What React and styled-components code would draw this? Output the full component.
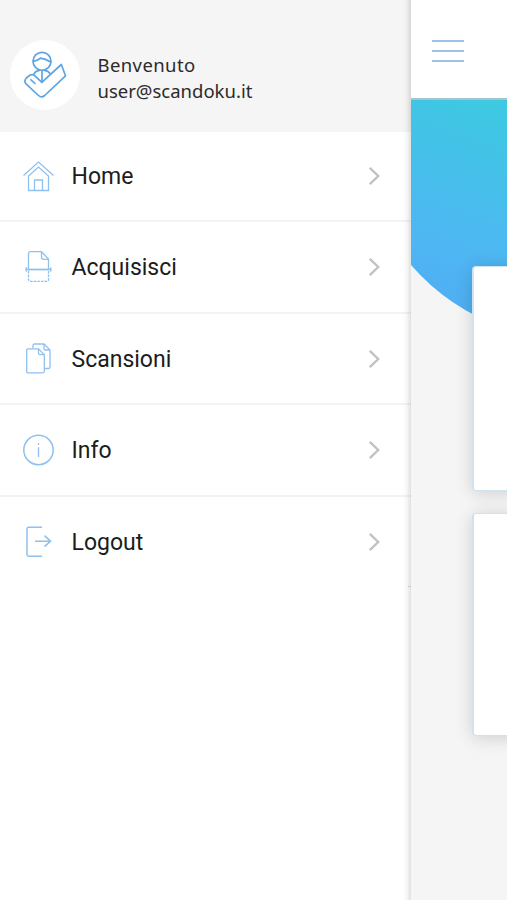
import React from "react";
import styled, {createGlobalStyle, css} from "styled-components";

const GlobalStyle = createGlobalStyle`
    * {
        box-sizing: border-box;
    }
    body {
        margin: 0;
        background: #f5f5f5;
        font-family: Roboto, "Liberation Sans", sans-serif;
    }
`;

const ScreenBlock = styled.div`
    display: flex;
    width: 507px;
    height: 900px;
    overflow: hidden;
`;

const DrawerBlock = styled.aside`
    flex: 0 0 411px;
    display: flex;
    flex-direction: column;
    background: white;
    z-index: 1;
    position: relative;

    /* soft edge over the header and the rows */
    &::after {
        content: "";
        position: absolute;
        top: 0;
        right: 0;
        bottom: 0;
        width: 8px;
        background: linear-gradient(to right, rgba(0, 0, 0, 0), rgba(0, 0, 0, 0.03) 45%, rgba(0, 0, 0, 0.12));
    }
`;

const UserBlock = styled.header`
    display: flex;
    align-items: center;
    gap: 17.5px;
    height: 132px;
    padding: 18px 10px 0;
    background: #f5f5f5;
`;

const AvatarBlock = styled.div`
    width: 70px;
    height: 70px;
    border-radius: 50%;
    background: white;
`;

const UserText = styled.div`
    font-family: "Noto Sans", sans-serif;
    font-size: 18.5px;
    line-height: 26px;
    color: #2b2b2b;
    padding-top: 5px;
`;

const UserName = styled.div`
    letter-spacing: 0.4px;
`;

const UserMail = styled.div`
    letter-spacing: 0;
`;

const MenuBlock = styled.nav`
    display: flex;
    flex-direction: column;
`;

const MenuItem = styled.a`
    display: flex;
    align-items: center;
    height: 91.5px;
    padding: 1px 30.5px 0 22px;
    color: #1c1c1c;
    ${props => props.$first && css`
        height: 90px;
        padding-top: 0;
    `}
    ${props => !props.$last && css`
        border-bottom: 2px solid #f3f3f3;
    `}
    ${props => props.$last && css`
        border-bottom: 2px solid transparent;
        padding-top: 2px;
    `}
`;

const MenuLabel = styled.span`
    flex: 1;
    margin-left: 17.5px;
    padding-top: 1px;
    font-size: 23px;
    letter-spacing: 0;
`;

/* end of the last divider, visible only at the drawer edge */
const MenuEnd = styled.div`
    align-self: flex-end;
    width: 3px;
    height: 1px;
    margin-top: -2px;
    background: #dedede;
`;

const PageBlock = styled.main`
    flex: 1;
    min-width: 0;
    background: #f5f5f5;
`;

const TopBar = styled.div`
    display: flex;
    align-items: center;
    height: 98px;
    padding: 4px 0 0 21px;
    background: white;
`;

const BurgerBlock = styled.div`
    display: flex;
    flex-direction: column;
    justify-content: space-between;
    width: 32px;
    height: 22px;
    span {
        height: 2px;
        background: #9fc1e6;
    }
`;

const HeroBlock = styled.div`
    height: 230px;
    border-top: 2px solid #a3c5cd;
    svg {
        display: block;
    }
`;

const CardList = styled.div`
    display: flex;
    flex-direction: column;
    gap: 22px;
    margin: -62px 0 0 61px;
    position: relative;
`;

const CardBlock = styled.div`
    width: 300px;
    height: ${props => props.$height}px;
    background: white;
    border: 1px solid #cfe2f0;
    border-width: 1px 1px 1px 2px;
    border-radius: 4px;
    box-shadow: 0 2px 18px rgba(0, 0, 0, 0.16);
`;

const Icon = ({children, color = "#8fc0ee"}) => (
    <svg width="32" height="32" viewBox="0 0 32 32" fill="none" stroke={color} strokeWidth="1.3">
        {children}
    </svg>
);

const HomeIcon = () => (
    <Icon>
        <path d="M1.5 15.5 16.5 2 31.5 15.5"/>
        <path d="M6.5 30.5V16L16.5 7 26.5 16V30.5Z"/>
        <path d="M12.5 30.5V20H20.5V30.5"/>
    </Icon>
);

const ScanIcon = () => (
    <Icon>
        <path d="M6.5 18V2.5Q6.5 .7 8.3 .7H19.5L26.5 8V18M19.5 .7V6.2Q19.5 8.3 21.5 8.3H26.5"/>
        <path d="M3.5 18.5H29.5" strokeWidth="1.8"/>
        <path d="M4.2 16V21M28.8 16V21" strokeWidth="1"/>
        <path d="M6.5 20V28.5Q6.5 30.3 8.3 30.3H24.7Q26.5 30.3 26.5 28.5V20" strokeDasharray="2.6 1"/>
    </Icon>
);

const FilesIcon = () => (
    <Icon>
        <path d="M11 5V2.5Q11 1 12.5 1H22L28 7V24Q28 25.5 26.5 25.5H22.5"/>
        <path d="M22 1V5.5Q22 7 23.5 7H28"/>
        <path d="M6 5.8H16.5L22.3 11.7V28.3Q22.3 29.8 20.8 29.8H6.2Q4.7 29.8 4.7 28.3V7.3Q4.7 5.8 6.2 5.8Z"/>
        <path d="M16.5 5.8V10.2Q16.5 11.7 18 11.7H22.3"/>
    </Icon>
);

const InfoIcon = () => (
    <Icon>
        <circle cx="16.5" cy="16" r="14.7" strokeWidth="1.5"/>
        <path d="M16.5 13.2V23M16.5 9V10.9"/>
    </Icon>
);

const LogoutIcon = () => (
    <Icon>
        <path d="M20 1.2H6.7Q5 1.2 5 2.9V28.5Q5 30.2 6.7 30.2H20" strokeWidth="1.5"/>
        <path d="M13 15.2H28.5M22.5 9.7 28.5 15.2 22.5 20.7" strokeWidth="1.6"/>
    </Icon>
);

const Chevron = () => (
    <svg width="14" height="20" viewBox="0 0 14 20" fill="none" stroke="#c2c2c2" strokeWidth="2.4">
        <path d="M2.8 1.8 11.2 10 2.8 18.2"/>
    </svg>
);

const Logo = () => (
    <svg width="70" height="70" viewBox="0 0 70 70" fill="none" stroke="#5ca5e4" strokeWidth="1.7"
         strokeLinecap="round" strokeLinejoin="round">
        <circle cx="32" cy="21.3" r="9"/>
        <path d="M23.3 21.3Q27 20.8 30.5 18.2Q35 18.8 40.8 22"/>
        <path d="M23.7 34.5Q25 30.8 29.5 30.3M34.5 30.3Q38.5 30.8 40.2 33.8M32 30.5V41"/>
        <path d="M31.8 42.3 25 35.8Q22.5 33.7 19.8 35.2L16.5 38Q13.5 41 16 43.8L28.5 55.5Q31.5 58.2 34.7 55.5L55.5 35.8 51.3 24.5Z"/>
        <path d="M21 39.8 25 43.5"/>
    </svg>
);

const menu = [
    {label: "Home", icon: <HomeIcon/>},
    {label: "Acquisisci", icon: <ScanIcon/>},
    {label: "Scansioni", icon: <FilesIcon/>},
    {label: "Info", icon: <InfoIcon/>},
    {label: "Logout", icon: <LogoutIcon/>},
];

const App = () => {
    return (
        <ScreenBlock>
            <GlobalStyle/>
            <DrawerBlock>
                <UserBlock>
                    <AvatarBlock>
                        <Logo/>
                    </AvatarBlock>
                    <UserText>
                        <UserName>Benvenuto</UserName>
                        <UserMail>user@scandoku.it</UserMail>
                    </UserText>
                </UserBlock>
                <MenuBlock>
                    {menu.map((item, index) => (
                        <MenuItem key={item.label} $first={index === 0} $last={index === menu.length - 1}>
                            {item.icon}
                            <MenuLabel>{item.label}</MenuLabel>
                            <Chevron/>
                        </MenuItem>
                    ))}
                    <MenuEnd/>
                </MenuBlock>
            </DrawerBlock>
            <PageBlock>
                <TopBar>
                    <BurgerBlock>
                        <span/>
                        <span/>
                        <span/>
                    </BurgerBlock>
                </TopBar>
                <HeroBlock>
                    <svg width="96" height="228" viewBox="0 0 96 228">
                        <defs>
                            <linearGradient id="hero" x1="0.55" y1="0" x2="0.4" y2="1">
                                <stop offset="0" stopColor="#3ec8e2"/>
                                <stop offset="0.7" stopColor="#4fb5f4"/>
                                <stop offset="1" stopColor="#4facf1"/>
                            </linearGradient>
                        </defs>
                        <path d="M0 0H96V229Q38 209 0 165Z" fill="url(#hero)"/>
                    </svg>
                </HeroBlock>
                <CardList>
                    <CardBlock $height={225}/>
                    <CardBlock $height={223}/>
                </CardList>
            </PageBlock>
        </ScreenBlock>
    );
};

export default App;
